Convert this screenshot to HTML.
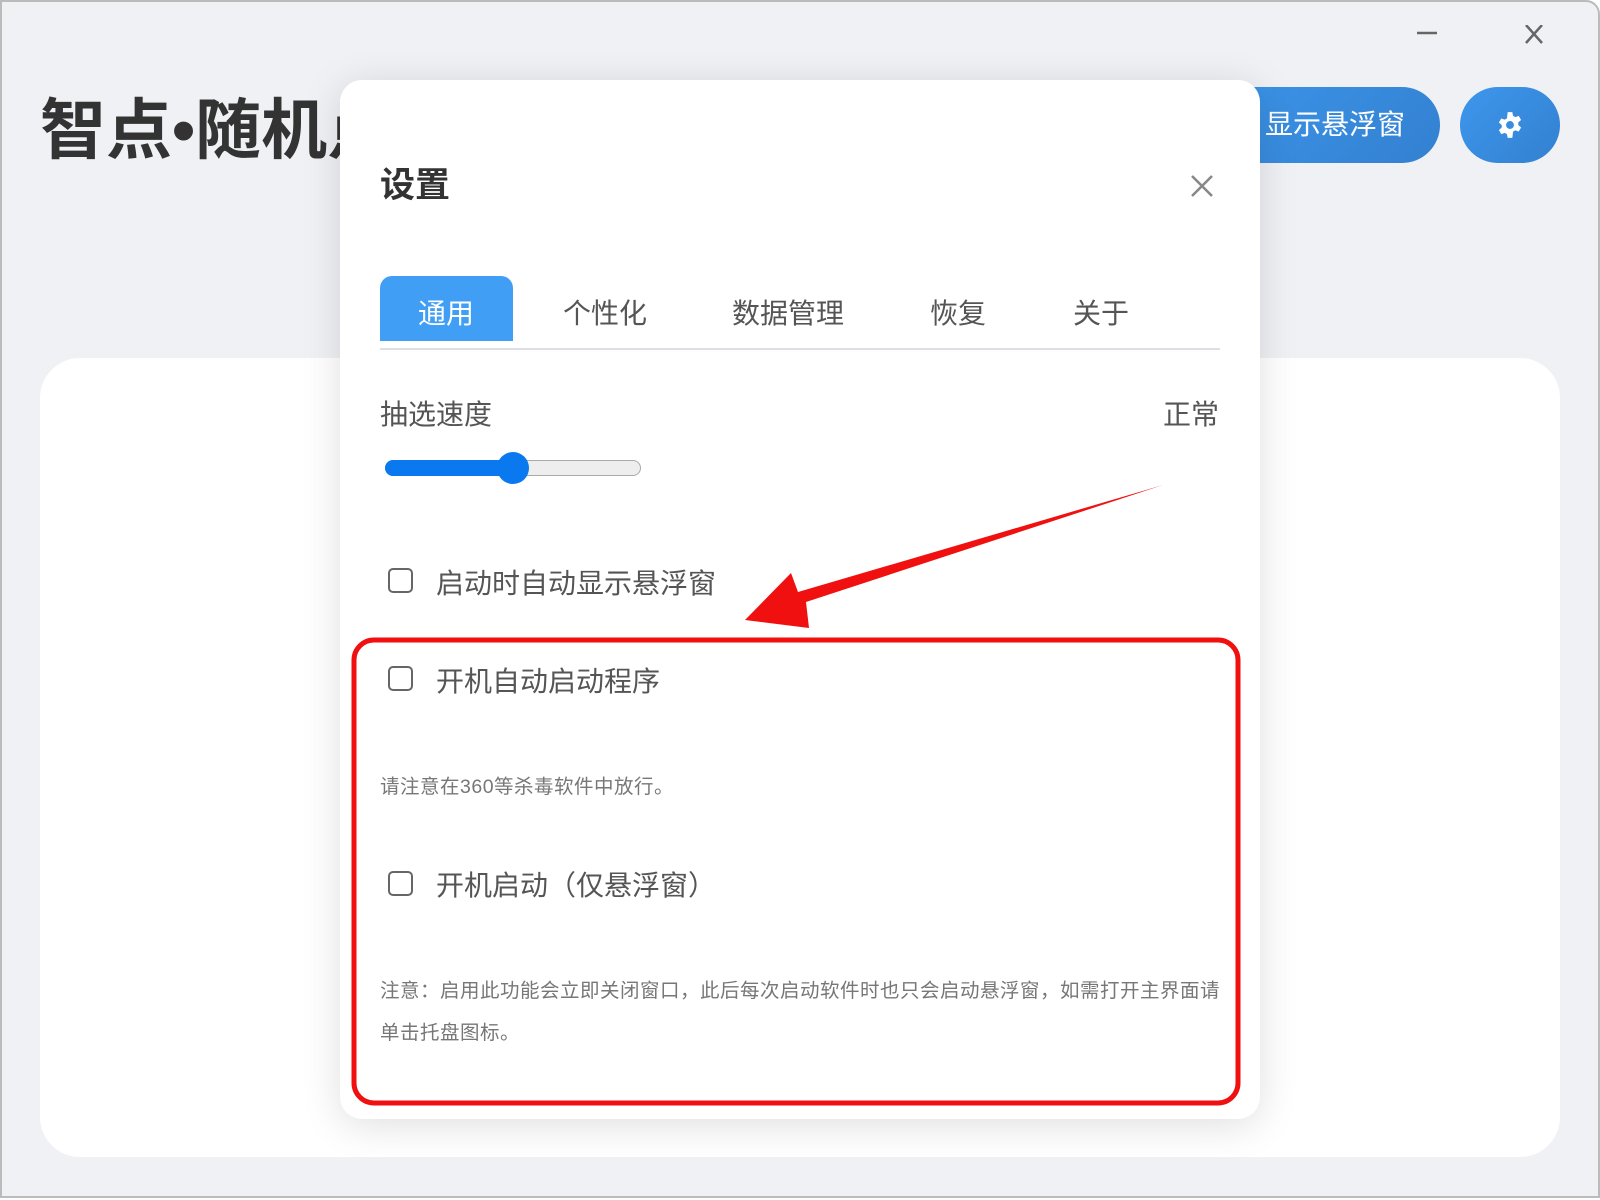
<!DOCTYPE html>
<html><head><meta charset="utf-8"><style>
*{margin:0;padding:0;box-sizing:border-box}
body{width:1600px;height:1200px;overflow:hidden;background:#fff;font-family:"Liberation Sans","Noto Sans CJK SC",sans-serif;position:relative}
.win{position:absolute;left:0;top:0;width:1600px;height:1198px;background:#f0f1f5;border:2px solid #bbb;border-radius:0 14px 0 0}
.abs{position:absolute}
.title{left:40px;top:88px;font-size:66px;font-weight:bold;color:#333;white-space:nowrap;line-height:84px}
.fbtn{left:1180px;top:87px;width:260px;height:76px;border-radius:38px;background:linear-gradient(135deg,#3d97ec,#3380d0);color:#fff;font-size:28px;line-height:76px;padding-left:85px;white-space:nowrap}
.gbtn{left:1460px;top:87px;width:100px;height:76px;border-radius:38px;background:linear-gradient(135deg,#3d97ec,#3380d0)}
.card{left:40px;top:358px;width:1520px;height:799px;background:#fff;border-radius:40px}
.dlg{left:340px;top:80px;width:920px;height:1039px;background:#fff;border-radius:22px;box-shadow:0 6px 40px rgba(0,0,0,.13)}
.t{color:#555;font-size:28px;white-space:nowrap;line-height:36px}
.cb{width:25px;height:25px;border:2px solid #666;border-radius:5px}
.note{color:#777;font-size:19.5px;line-height:42px;width:850px;letter-spacing:0.5px;white-space:nowrap}
</style></head><body>
<div class="win"></div>
<svg class="abs" style="left:1410px;top:25px" width="150" height="24"><line x1="7" y1="8" x2="27" y2="8" stroke="#666" stroke-width="2.5"/><line x1="116" y1="0" x2="132" y2="18" stroke="#666" stroke-width="2.5"/><line x1="132" y1="0" x2="116" y2="18" stroke="#666" stroke-width="2.5"/></svg>
<div class="abs title">智点•随机点名</div>
<div class="abs fbtn">显示悬浮窗</div>
<div class="abs gbtn"><svg class="abs" style="left:36px;top:24px" width="28" height="28" viewBox="0 0 24 24"><path fill="#fff" d="M10 1h4l.6 3.1 1.9 1.1 3-1 2 3.5-2.4 2.1v2.2l2.4 2.1-2 3.5-3-1-1.900 1.1L14 23h-4l-.6-3.1-1.9-1.1-3 1-2-3.5 2.4-2.1v-2.2L2.5 9.9l2-3.5 3 1 1.9-1.1z"/><circle cx="12" cy="12" r="3.4" fill="#3a8ee0"/></svg></div>
<div class="abs card"></div>
<div class="abs dlg"></div>
<div class="abs" style="left:380px;top:164px;font-size:35px;font-weight:bold;color:#333;line-height:44px">设置</div>
<svg class="abs" style="left:1191px;top:175px" width="22" height="22"><path d="M1 1L21 21M21 1L1 21" stroke="#888" stroke-width="2.6"/></svg>
<div class="abs" style="left:380px;top:276px;width:133px;height:65px;background:#419ef5;border-radius:12px 12px 0 0"></div>
<div class="abs" style="left:380px;top:348px;width:840px;height:2px;background:#dcdfe6"></div>
<div class="abs t" style="left:418px;top:296px;color:#fff">通用</div>
<div class="abs t" style="left:563px;top:296px">个性化</div>
<div class="abs t" style="left:732px;top:296px">数据管理</div>
<div class="abs t" style="left:930px;top:296px">恢复</div>
<div class="abs t" style="left:1073px;top:296px">关于</div>
<div class="abs t" style="left:380px;top:397px">抽选速度</div>
<div class="abs t" style="left:1163px;top:397px">正常</div>
<div class="abs" style="left:385px;top:460px;width:256px;height:16px;border-radius:8px;background:#eee;border:1.5px solid #aaa"></div>
<div class="abs" style="left:385px;top:460px;width:130px;height:16px;border-radius:8px;background:#0a79f0"></div>
<div class="abs" style="left:497px;top:452px;width:32px;height:32px;border-radius:50%;background:#0a79f0"></div>
<div class="abs cb" style="left:388px;top:568px"></div>
<div class="abs t" style="left:436px;top:566px">启动时自动显示悬浮窗</div>
<div class="abs cb" style="left:388px;top:666px"></div>
<div class="abs t" style="left:436px;top:664px">开机自动启动程序</div>
<div class="abs note" style="left:380px;top:766px">请注意在360等杀毒软件中放行。</div>
<div class="abs cb" style="left:388px;top:871px"></div>
<div class="abs t" style="left:436px;top:868px">开机启动（仅悬浮窗）</div>
<div class="abs note" style="left:380px;top:970px">注意：启用此功能会立即关闭窗口，此后每次启动软件时也只会启动悬浮窗，如需打开主界面请<br>单击托盘图标。</div>
<svg class="abs" style="left:0;top:0" width="1600" height="1200">
<rect x="354" y="640" width="884" height="463" rx="20" fill="none" stroke="#f01010" stroke-width="5"/>
<path d="M1163 485 L806 602 L809 628 L745 620 L791 573 L798 592 Z" fill="#f01010"/>
</svg>
</body></html>
